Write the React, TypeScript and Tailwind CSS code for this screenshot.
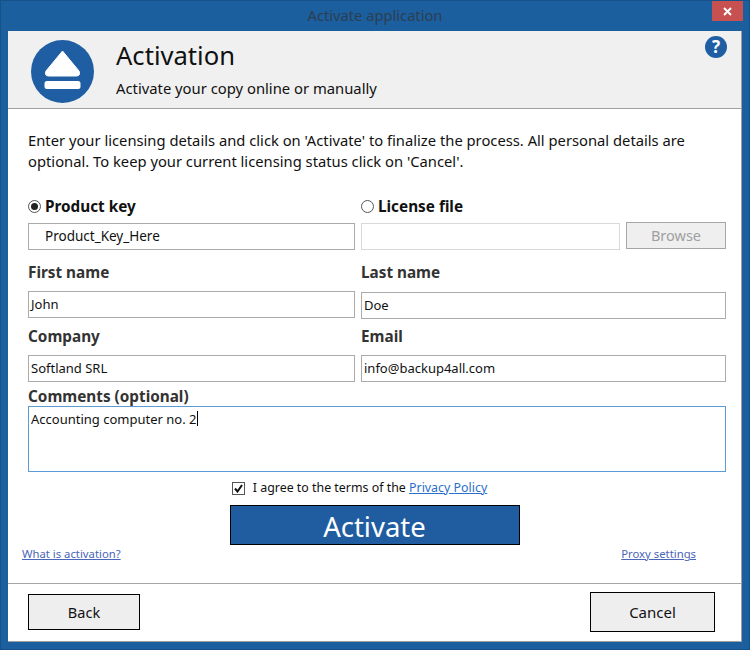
import React from "react";

function Field({ value, className = "" }: { value?: string; className?: string }) {
  return (
    <div className={"h-[27px] border border-[#ababab] bg-white leading-[25px] text-[#111] whitespace-nowrap " + className}>
      {value}
    </div>
  );
}

function Label({ children }: { children: React.ReactNode }) {
  return <div className="text-[15.3px] leading-[20px] font-bold text-[#333]">{children}</div>;
}

export default function App() {
  return (
    <div className="w-[750px] h-[650px] bg-[#1b5f9f] border border-[#17518a] flex flex-col font-['Noto_Sans',sans-serif] text-[#111] overflow-hidden">
      <div className="relative h-[30px] shrink-0 flex items-center justify-center pb-[2px] text-[14.7px] text-[#2c3e50]">
        Activate application
        <div className="absolute top-0 right-[6px] w-[31px] h-[20px] bg-[#c75050] flex items-center justify-center">
          <svg width="9" height="9" viewBox="0 0 9 9"><path d="M1 1l7 7M8 1L1 8" stroke="#fff" strokeWidth="2" /></svg>
        </div>
      </div>
      <div className="mx-[7px] h-[611px] bg-white flex flex-col border-b border-r border-[#a0a0a0]">
        <div className="h-[78px] shrink-0 bg-[#f0f0f0] border-b border-[#a0a0a0] flex relative">
          <svg className="ml-[23px] mt-[9px]" width="63" height="63" viewBox="0 0 63 63">
            <circle cx="31.5" cy="31.5" r="31.5" fill="#1f5ea3" />
            <path d="M31.5 11 L48 31 Q50 36 45 36 L18 36 Q13 36 15 31 Z" fill="#fff" stroke="#fff" strokeWidth="1" strokeLinejoin="round" />
            <rect x="13.5" y="41" width="36" height="8" rx="2.5" fill="#fff" />
          </svg>
          <div className="ml-[22px]">
            <div className="text-[25.6px] leading-[34px] mt-[8px]">Activation</div>
            <div className="text-[14.8px] leading-[20px] mt-[5px]">Activate your copy online or manually</div>
          </div>
          <svg className="absolute right-[14px] top-[5px]" width="22" height="22" viewBox="0 0 22 22">
            <circle cx="11" cy="11" r="11" fill="#1f5ea3" />
            <text x="11" y="17" textAnchor="middle" fontSize="17" fontWeight="700" fill="#fff" fontFamily="Noto Sans">?</text>
          </svg>
        </div>

        <div className="flex-1 flex flex-col pl-[20px] pr-[15px]">
          <p className="mt-[21px] text-[14.75px] leading-[21px] w-[690px] text-[#111]">
            Enter your licensing details and click on 'Activate' to finalize the process. All personal details are optional. To keep your current licensing status click on 'Cancel'.
          </p>

          <div className="mt-[24px] grid grid-cols-[327px_365px] gap-x-[6px]">
            <div className="flex items-center gap-[4px] h-[20px]">
              <span className="w-[13px] h-[13px] rounded-full border border-[#555] flex items-center justify-center bg-white"><span className="w-[7px] h-[7px] rounded-full bg-[#222]" /></span>
              <span className="text-[15.3px] font-bold text-[#111]">Product key</span>
            </div>
            <div className="flex items-center gap-[4px] h-[20px]">
              <span className="w-[13px] h-[13px] rounded-full border border-[#555] bg-white" />
              <span className="text-[15.3px] font-bold text-[#111]">License file</span>
            </div>
            <Field value="Product_Key_Here" className="mt-[7px] pl-[16px] text-[13.5px]" />
            <div className="mt-[7px] flex gap-[6px]">
              <div className="w-[259px] h-[27px] border border-[#d9d9d9] bg-white" />
              <div className="w-[100px] h-[27px] -mt-px border border-[#a6a6a6] bg-[#efefef] text-[14.5px] leading-[25px] text-center text-[#a0a0a0]">Browse</div>
            </div>

            <div className="mt-[12px]"><Label>First name</Label></div>
            <div className="mt-[12px]"><Label>Last name</Label></div>
            <Field value="John" className="mt-[9px] pl-[2px] text-[13px]" />
            <Field value="Doe" className="mt-[10px] pl-[2px] text-[13px]" />

            <div className="mt-[7px]"><Label>Company</Label></div>
            <div className="mt-[7px]"><Label>Email</Label></div>
            <Field value="Softland SRL" className="mt-[9px] pl-[2px] text-[13px]" />
            <Field value="info@backup4all.com" className="mt-[9px] pl-[2px] text-[13px]" />
          </div>

          <div className="mt-[4px]"><Label>Comments (optional)</Label></div>
          <div className="w-[698px] h-[66px] border border-[#5b9bd5] bg-white text-[13px] leading-[24px] pl-[2px] flex items-start">
            Accounting computer no. 2<span className="inline-block w-px h-[15px] bg-black mt-[4px] ml-px" />
          </div>

          <div className="mt-[7px] flex items-center justify-center pr-[35px] h-[18px] text-[12.4px]">
            <span className="w-[13px] h-[13px] border border-[#555] flex items-center justify-center mr-[8px] bg-white">
              <svg width="9" height="9" viewBox="0 0 9 9"><path d="M1 4.5l2.5 3L8 1" stroke="#111" strokeWidth="2" fill="none" /></svg>
            </span>
            I agree to the terms of the&nbsp;<span className="text-[#2a6fc9] underline">Privacy Policy</span>
          </div>

          <div className="mt-[8px] self-center w-[290px] h-[40px] border border-black bg-[#205da0] text-white text-[27.5px] pt-[2px] leading-[38px] text-center ml-[-5px]">Activate</div>

          <div className="mt-[1px] -ml-[6px] flex justify-between text-[11.3px] leading-[16px] text-[#4a66b8] underline">
            <span>What is activation?</span>
            <span className="mr-[30px]">Proxy settings</span>
          </div>
        </div>

        <div className="h-[58px] shrink-0 border-t border-[#a6a6a6] flex justify-between pl-[20px] pr-[26px]">
          <div className="mt-[10px] w-[112px] h-[36px] border border-black bg-[#eeeeee] text-[14.5px] leading-[34px] text-center">Back</div>
          <div className="mt-[8px] w-[125px] h-[40px] border border-black bg-[#eeeeee] text-[15px] leading-[38px] text-center">Cancel</div>
        </div>
      </div>
    </div>
  );
}
